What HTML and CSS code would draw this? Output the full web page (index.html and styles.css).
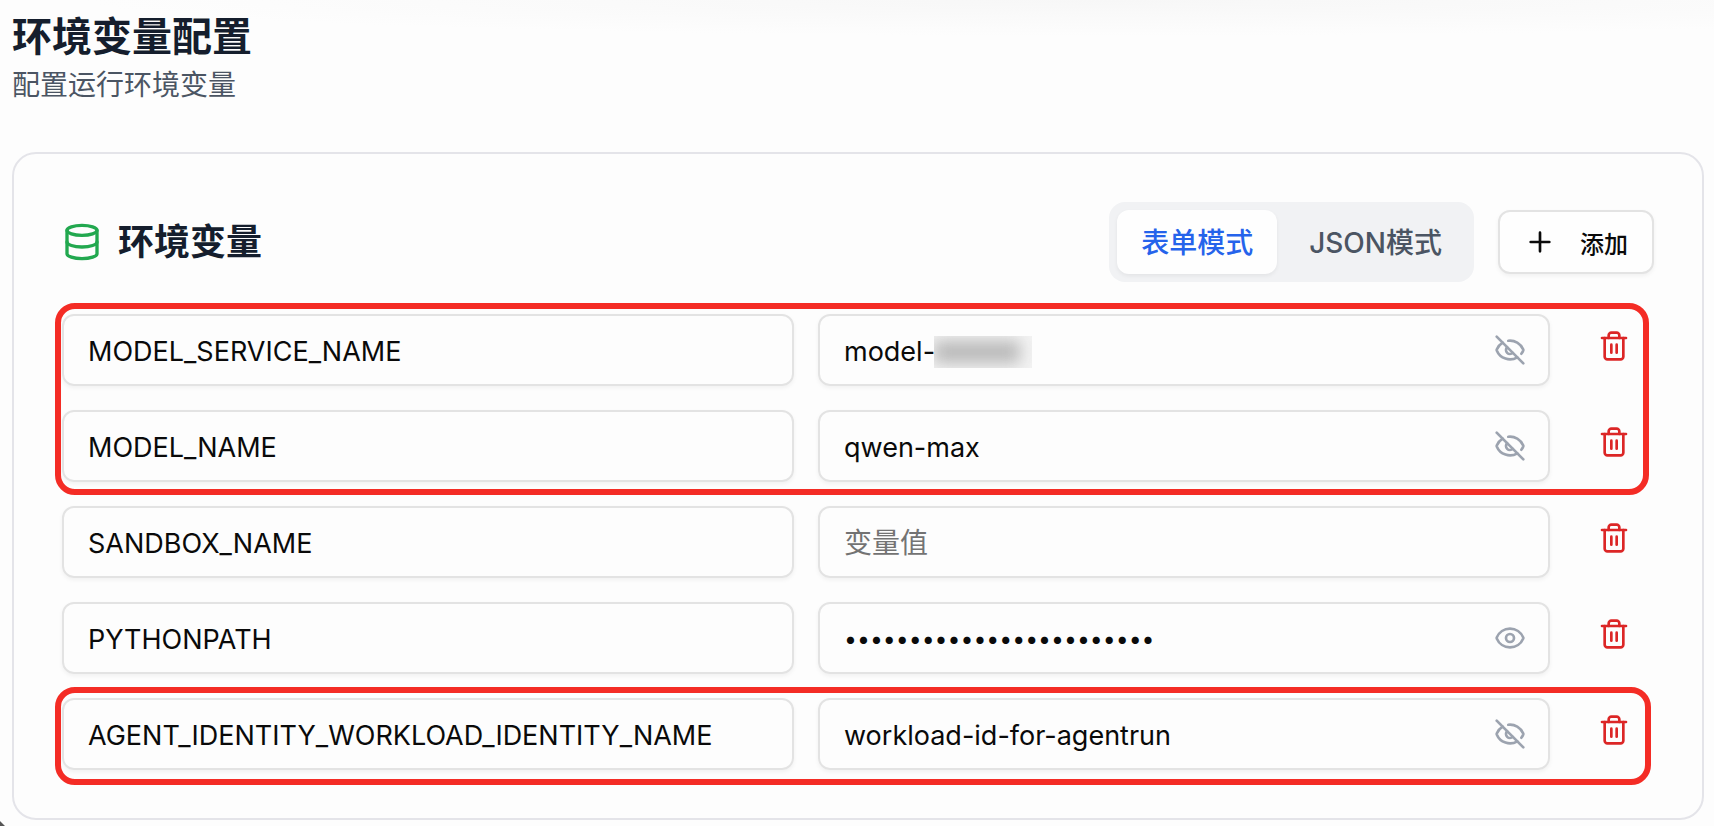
FILE: index.html
```html
<!DOCTYPE html>
<html lang="zh-CN">
<head>
<meta charset="utf-8">
<title>环境变量配置</title>
<link rel="stylesheet" href="styles.css">
</head>
<body>
<svg class="sprite" aria-hidden="true">
  <symbol id="database" viewBox="0 0 24 24"><ellipse cx="12" cy="5" rx="9" ry="3"/><path d="M3 5V19A9 3 0 0 0 21 19V5"/><path d="M3 12A9 3 0 0 0 21 12"/></symbol>
  <symbol id="plus" viewBox="0 0 24 24"><path d="M5 12h14M12 5v14"/></symbol>
  <symbol id="trash" viewBox="0 0 24 24"><path d="M3 6h18"/><path d="M19 6v14c0 1-1 2-2 2H7c-1 0-2-1-2-2V6"/><path d="M8 6V4c0-1 1-2 2-2h4c1 0 2 1 2 2v2"/><path d="M10 11v6M14 11v6"/></symbol>
  <symbol id="eye" viewBox="0 0 24 24"><path d="M2.062 12.348a1 1 0 0 1 0-.696 10.75 10.75 0 0 1 19.876 0 1 1 0 0 1 0 .696 10.75 10.75 0 0 1-19.876 0"/><circle cx="12" cy="12" r="3"/></symbol>
  <symbol id="eye-off" viewBox="0 0 24 24"><path d="M10.733 5.076a10.744 10.744 0 0 1 11.205 6.575 1 1 0 0 1 0 .696 10.747 10.747 0 0 1-1.444 2.49"/><path d="M14.084 14.158a3 3 0 0 1-4.242-4.242"/><path d="M17.479 17.499a10.75 10.75 0 0 1-15.417-5.151 1 1 0 0 1 0-.696 10.75 10.75 0 0 1 4.446-5.143"/><path d="m2 2 20 20"/></symbol>
</svg>
<main class="page">
  <header class="page-header">
    <h1 class="page-title">环境变量配置</h1>
    <p class="page-subtitle">配置运行环境变量</p>
  </header>
  <section class="card">
    <div class="card-header">
      <h2 class="card-title"><svg class="icon icon-title"><use href="#database"/></svg>环境变量</h2>
      <div class="actions">
        <div class="tabs">
          <button class="tab tab-active" type="button">表单模式</button>
          <button class="tab" type="button">JSON模式</button>
        </div>
        <button class="add" type="button"><svg class="icon"><use href="#plus"/></svg>添加</button>
      </div>
    </div>
    <div class="rows">
      <div class="group group-marked">
        <div class="row">
          <input class="input" type="text" aria-label="变量名" value="MODEL_SERVICE_NAME">
          <div class="field">
            <input class="input" type="text" aria-label="变量值" value="model-">
            <span class="redacted"></span>
            <button class="toggle" type="button" aria-label="隐藏"><svg class="icon"><use href="#eye-off"/></svg></button>
          </div>
          <button class="delete" type="button" aria-label="删除"><svg class="icon"><use href="#trash"/></svg></button>
        </div>
        <div class="row">
          <input class="input" type="text" aria-label="变量名" value="MODEL_NAME">
          <div class="field">
            <input class="input" type="text" aria-label="变量值" value="qwen-max">
            <button class="toggle" type="button" aria-label="隐藏"><svg class="icon"><use href="#eye-off"/></svg></button>
          </div>
          <button class="delete" type="button" aria-label="删除"><svg class="icon"><use href="#trash"/></svg></button>
        </div>
      </div>
      <div class="row">
        <input class="input" type="text" aria-label="变量名" value="SANDBOX_NAME">
        <div class="field">
          <input class="input" type="text" aria-label="变量值" placeholder="变量值">
        </div>
        <button class="delete" type="button" aria-label="删除"><svg class="icon"><use href="#trash"/></svg></button>
      </div>
      <div class="row">
        <input class="input" type="text" aria-label="变量名" value="PYTHONPATH">
        <div class="field">
          <input class="input input-secret" type="password" aria-label="变量值" value="/opt/python:/code/python">
          <button class="toggle" type="button" aria-label="显示"><svg class="icon"><use href="#eye"/></svg></button>
        </div>
        <button class="delete" type="button" aria-label="删除"><svg class="icon"><use href="#trash"/></svg></button>
      </div>
      <div class="group group-marked group-last">
        <div class="row">
          <input class="input" type="text" aria-label="变量名" value="AGENT_IDENTITY_WORKLOAD_IDENTITY_NAME">
          <div class="field">
            <input class="input" type="text" aria-label="变量值" value="workload-id-for-agentrun">
            <button class="toggle" type="button" aria-label="隐藏"><svg class="icon"><use href="#eye-off"/></svg></button>
          </div>
          <button class="delete" type="button" aria-label="删除"><svg class="icon"><use href="#trash"/></svg></button>
        </div>
      </div>
    </div>
  </section>
</main>
</body>
</html>
```
FILE: styles.css
```css
* { box-sizing: border-box; }

body {
  margin: 0;
  background: #fdfdfd;
  color: #0a0a0a;
  font-family: Inter, "Noto Sans CJK SC", sans-serif;
  font-size: 28px;
}

button, input { font: inherit; color: inherit; }
button { border: 0; padding: 0; background: none; cursor: pointer; }

.sprite { display: none; }

.icon {
  flex: none;
  display: block;
  width: 32px;
  height: 32px;
  fill: none;
  stroke: currentColor;
  stroke-width: 2;
  stroke-linecap: round;
  stroke-linejoin: round;
}

/* Soft shade under the top edge, dark window corner at the bottom left */
.page {
  padding: 9px 10px 6px 12px;
  background:
    linear-gradient(45deg, #555 3px, transparent 4px) left bottom / 6px 6px no-repeat,
    radial-gradient(ellipse 60% 36px at 65% 0, #f7f7f7, #fdfdfd);
}

.page-header { margin-bottom: 47px; }

.page-title {
  margin: 0;
  font-size: 40px;
  line-height: 56px;
  font-weight: 700;
  color: #151e2d;
}

.page-subtitle {
  margin: 0;
  line-height: 40px;
  color: #4b5563;
}

.card {
  padding: 48px;
  border: 2px solid #e4e4e9;
  border-radius: 24px;
}

.card-header {
  display: flex;
  align-items: center;
  justify-content: space-between;
  margin-bottom: 32px;
}

.card-title {
  display: flex;
  align-items: center;
  gap: 16px;
  margin: 0;
  font-size: 36px;
  line-height: 56px;
  font-weight: 700;
  color: #151e2d;
}

.icon-title { width: 40px; height: 40px; color: #22a84f; }

.actions { display: flex; align-items: center; gap: 24px; }

.tabs {
  display: flex;
  gap: 8px;
  padding: 8px;
  border-radius: 16px;
  background: #f1f2f4;
}

.tab {
  height: 64px;
  padding: 0 24px 2px;
  border-radius: 12px;
  font-weight: 500;
  color: #4b5563;
}

.tab-active {
  background: #fefefe;
  color: #2563eb;
  box-shadow: 0 2px 4px rgba(0, 0, 0, 0.06);
}

.add {
  display: flex;
  align-items: center;
  gap: 24px;
  height: 64px;
  padding: 0 24px;
  border: 2px solid #e3e3e3;
  border-radius: 12px;
  background: #fefefe;
  box-shadow: 0 2px 4px rgba(0, 0, 0, 0.05);
  font-size: 24px;
  font-weight: 500;
}

.rows, .group { display: grid; gap: 24px; }

.row {
  display: grid;
  grid-template-columns: 1fr 1fr 80px;
  gap: 24px;
}

.field { position: relative; }

.input {
  display: block;
  width: 100%;
  height: 72px;
  padding: 2px 24px 0;
  border: 2px solid #e3e3e3;
  border-radius: 12px;
  background: transparent;
  box-shadow: 0 2px 4px rgba(0, 0, 0, 0.05);
  outline: 0;
  font-size: 27px;
}

.input::placeholder { color: #737373; opacity: 1; font-size: 28px; }

.input-secret { font-size: 23px; }

.toggle {
  position: absolute;
  top: 20px;
  right: 24px;
  color: #9ca3af;
}

.delete {
  display: grid;
  place-items: center;
  height: 64px;
  color: #dc2626;
}

/* Highlight frame drawn around a group of rows */
.group-marked { position: relative; }

.group-marked::after {
  content: "";
  position: absolute;
  inset: -11px 5px -13px -7px;
  border: 6px solid #f42c25;
  border-radius: 20px;
  pointer-events: none;
}

.group-last::after { inset: -11px 3px -15px -7px; }

/* Masked part of a value */
.redacted {
  position: absolute;
  top: 22px;
  left: 116px;
  width: 98px;
  height: 32px;
  overflow: hidden;
  background: #f3f3f3;
}

.redacted::before {
  content: "";
  position: absolute;
  inset: 5px 12px 5px 0;
  background: #b8b8b8;
  filter: blur(8px);
}
```
